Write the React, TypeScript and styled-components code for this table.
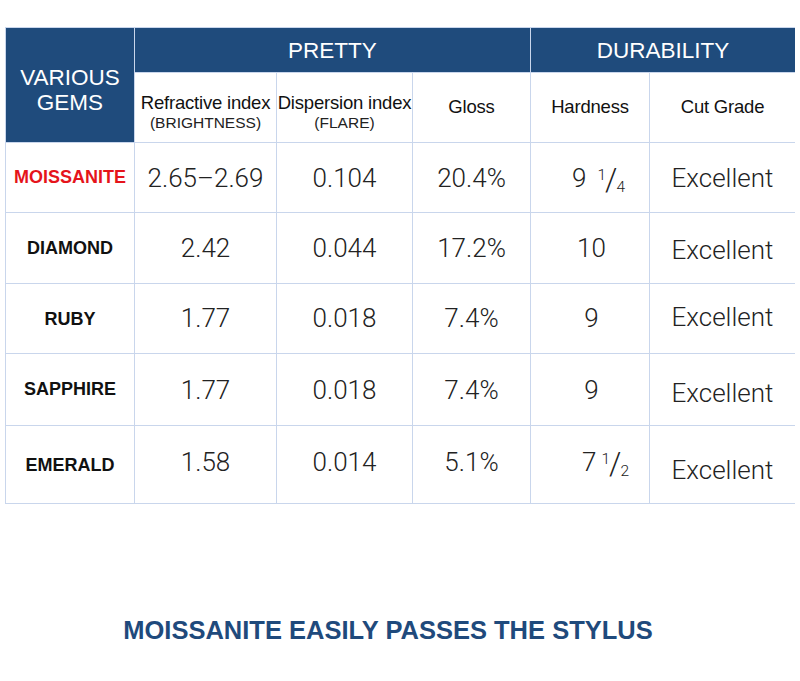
import React from "react";
import styled, { createGlobalStyle } from "styled-components";

const Global = createGlobalStyle`
  html, body { margin: 0; padding: 0; background: #ffffff; }
  body { font-family: "Liberation Sans", Arial, sans-serif; }
`;

const BLUE = "#1f4b7c";
const LINE = "#c9d6ec";

const Page = styled.div`
  width: 800px;
  height: 681px;
  padding: 27px 5px 0 5px;
  box-sizing: border-box;
  overflow: hidden;
`;

const Table = styled.div`
  display: grid;
  width: 790px;
  box-sizing: border-box;
  grid-template-columns: 128px 141px 135px 117px 118px 145px;
  grid-template-rows: 44px 69px 69px 70px 69px 71px 77px;
  gap: 1px;
  padding: 1px;
  background: ${LINE};
`;

const Cell = styled.div<{ $dy?: number; $padL?: number }>`
  background: #ffffff;
  display: flex;
  align-items: center;
  justify-content: center;
  text-align: center;
  white-space: nowrap;
  padding-top: ${(p) => (p.$dy && p.$dy > 0 ? p.$dy * 2 : 0)}px;
  padding-bottom: ${(p) => (p.$dy && p.$dy < 0 ? -p.$dy * 2 : 0)}px;
  padding-left: ${(p) => p.$padL ?? 0}px;
  box-sizing: border-box;
`;

const BlueHead = styled(Cell)<{ $span?: number; $rows?: number }>`
  background: ${BLUE};
  color: #ffffff;
  font-size: 22.5px;
  line-height: 25px;
  grid-column: span ${(p) => p.$span ?? 1};
  grid-row: span ${(p) => p.$rows ?? 1};
`;

const SubHead = styled(Cell)`
  flex-direction: column;
  color: #111111;
  font-size: 18.5px;
  line-height: 20px;
  letter-spacing: -0.2px;
`;

const SubNote = styled.span`
  font-size: 15.5px;
  line-height: 19px;
  letter-spacing: 0;
  color: #222222;
`;

const GemName = styled(Cell)<{ $red?: boolean }>`
  font-weight: 700;
  font-size: 18px;
  color: ${(p) => (p.$red ? "#e5141b" : "#111111")};
`;

const Value = styled(Cell)`
  font-family: Roboto, "Liberation Sans", sans-serif;
  font-weight: 300;
  font-size: 26px;
  color: #222222;
`;

const FracBox = styled.span`
  display: inline-flex;
  align-items: baseline;
`;

const Whole = styled.span<{ $gap: number }>`
  margin-right: ${(p) => p.$gap}px;
`;

const Num = styled.span`
  font-size: 15.5px;
  line-height: 15px;
  position: relative;
  top: -7px;
  margin-right: -1px;
`;

const Slash = styled.span`
  font-size: 31px;
  line-height: 26px;
  position: relative;
  top: 3px;
`;

const Den = styled.span`
  font-size: 15.5px;
  line-height: 15px;
  position: relative;
  top: 5px;
  margin-left: -1px;
`;

const Title = styled.h2`
  margin: 114px 0 0 0;
  padding-right: 24px;
  text-align: center;
  font-family: "Liberation Sans", Arial, sans-serif;
  font-weight: 700;
  font-size: 25.5px;
  line-height: 24px;
  color: #1f4a7c;
`;

type Frac = { whole: string; num: string; den: string; gap: number };

type Row = {
  name: string;
  red?: boolean;
  nameDy?: number;
  ri: string;
  di: string;
  gloss: string;
  hard: string | Frac;
  hardPad?: number;
  cut: string;
  dy?: number;
  cutDy?: number;
};

const rows: Row[] = [
  { name: "MOISSANITE", red: true, ri: "2.65–2.69", di: "0.104", gloss: "20.4%", hard: { whole: "9", num: "1", den: "4", gap: 11 }, hardPad: 17, cut: "Excellent" },
  { name: "DIAMOND", ri: "2.42", di: "0.044", gloss: "17.2%", hard: "10", hardPad: 3, cut: "Excellent", cutDy: 2 },
  { name: "RUBY", nameDy: 1, ri: "1.77", di: "0.018", gloss: "7.4%", hard: "9", hardPad: 3, cut: "Excellent", dy: -1, cutDy: -2 },
  { name: "SAPPHIRE", ri: "1.77", di: "0.018", gloss: "7.4%", hard: "9", hardPad: 3, cut: "Excellent", cutDy: 3 },
  { name: "EMERALD", nameDy: 1, ri: "1.58", di: "0.014", gloss: "5.1%", hard: { whole: "7", num: "1", den: "2", gap: 5 }, hardPad: 31, cut: "Excellent", dy: -3, cutDy: 5 },
];

function Hardness({ value }: { value: string | Frac }) {
  if (typeof value === "string") return <>{value}</>;
  return (
    <FracBox>
      <Whole $gap={value.gap}>{value.whole}</Whole>
      <Num>{value.num}</Num>
      <Slash>/</Slash>
      <Den>{value.den}</Den>
    </FracBox>
  );
}

export default function App() {
  return (
    <>
      <Global />
      <Page>
        <Table>
          <BlueHead $rows={2} $dy={5}>
            VARIOUS
            <br />
            GEMS
          </BlueHead>
          <BlueHead $span={3}>PRETTY</BlueHead>
          <BlueHead $span={2}>DURABILITY</BlueHead>

          <SubHead $dy={5}>
            Refractive index
            <SubNote>(BRIGHTNESS)</SubNote>
          </SubHead>
          <SubHead $dy={5}>
            Dispersion index
            <SubNote>(FLARE)</SubNote>
          </SubHead>
          <SubHead $dy={-1}>Gloss</SubHead>
          <SubHead $dy={-1}>Hardness</SubHead>
          <SubHead $dy={-1}>Cut Grade</SubHead>

          {rows.map((r) => (
            <React.Fragment key={r.name}>
              <GemName $red={r.red} $dy={r.nameDy}>
                {r.name}
              </GemName>
              <Value $dy={r.dy}>{r.ri}</Value>
              <Value $dy={r.dy}>{r.di}</Value>
              <Value $dy={r.dy}>{r.gloss}</Value>
              <Value $dy={r.dy} $padL={r.hardPad}>
                <Hardness value={r.hard} />
              </Value>
              <Value $dy={r.cutDy}>{r.cut}</Value>
            </React.Fragment>
          ))}
        </Table>
        <Title>MOISSANITE EASILY PASSES THE STYLUS</Title>
      </Page>
    </>
  );
}
